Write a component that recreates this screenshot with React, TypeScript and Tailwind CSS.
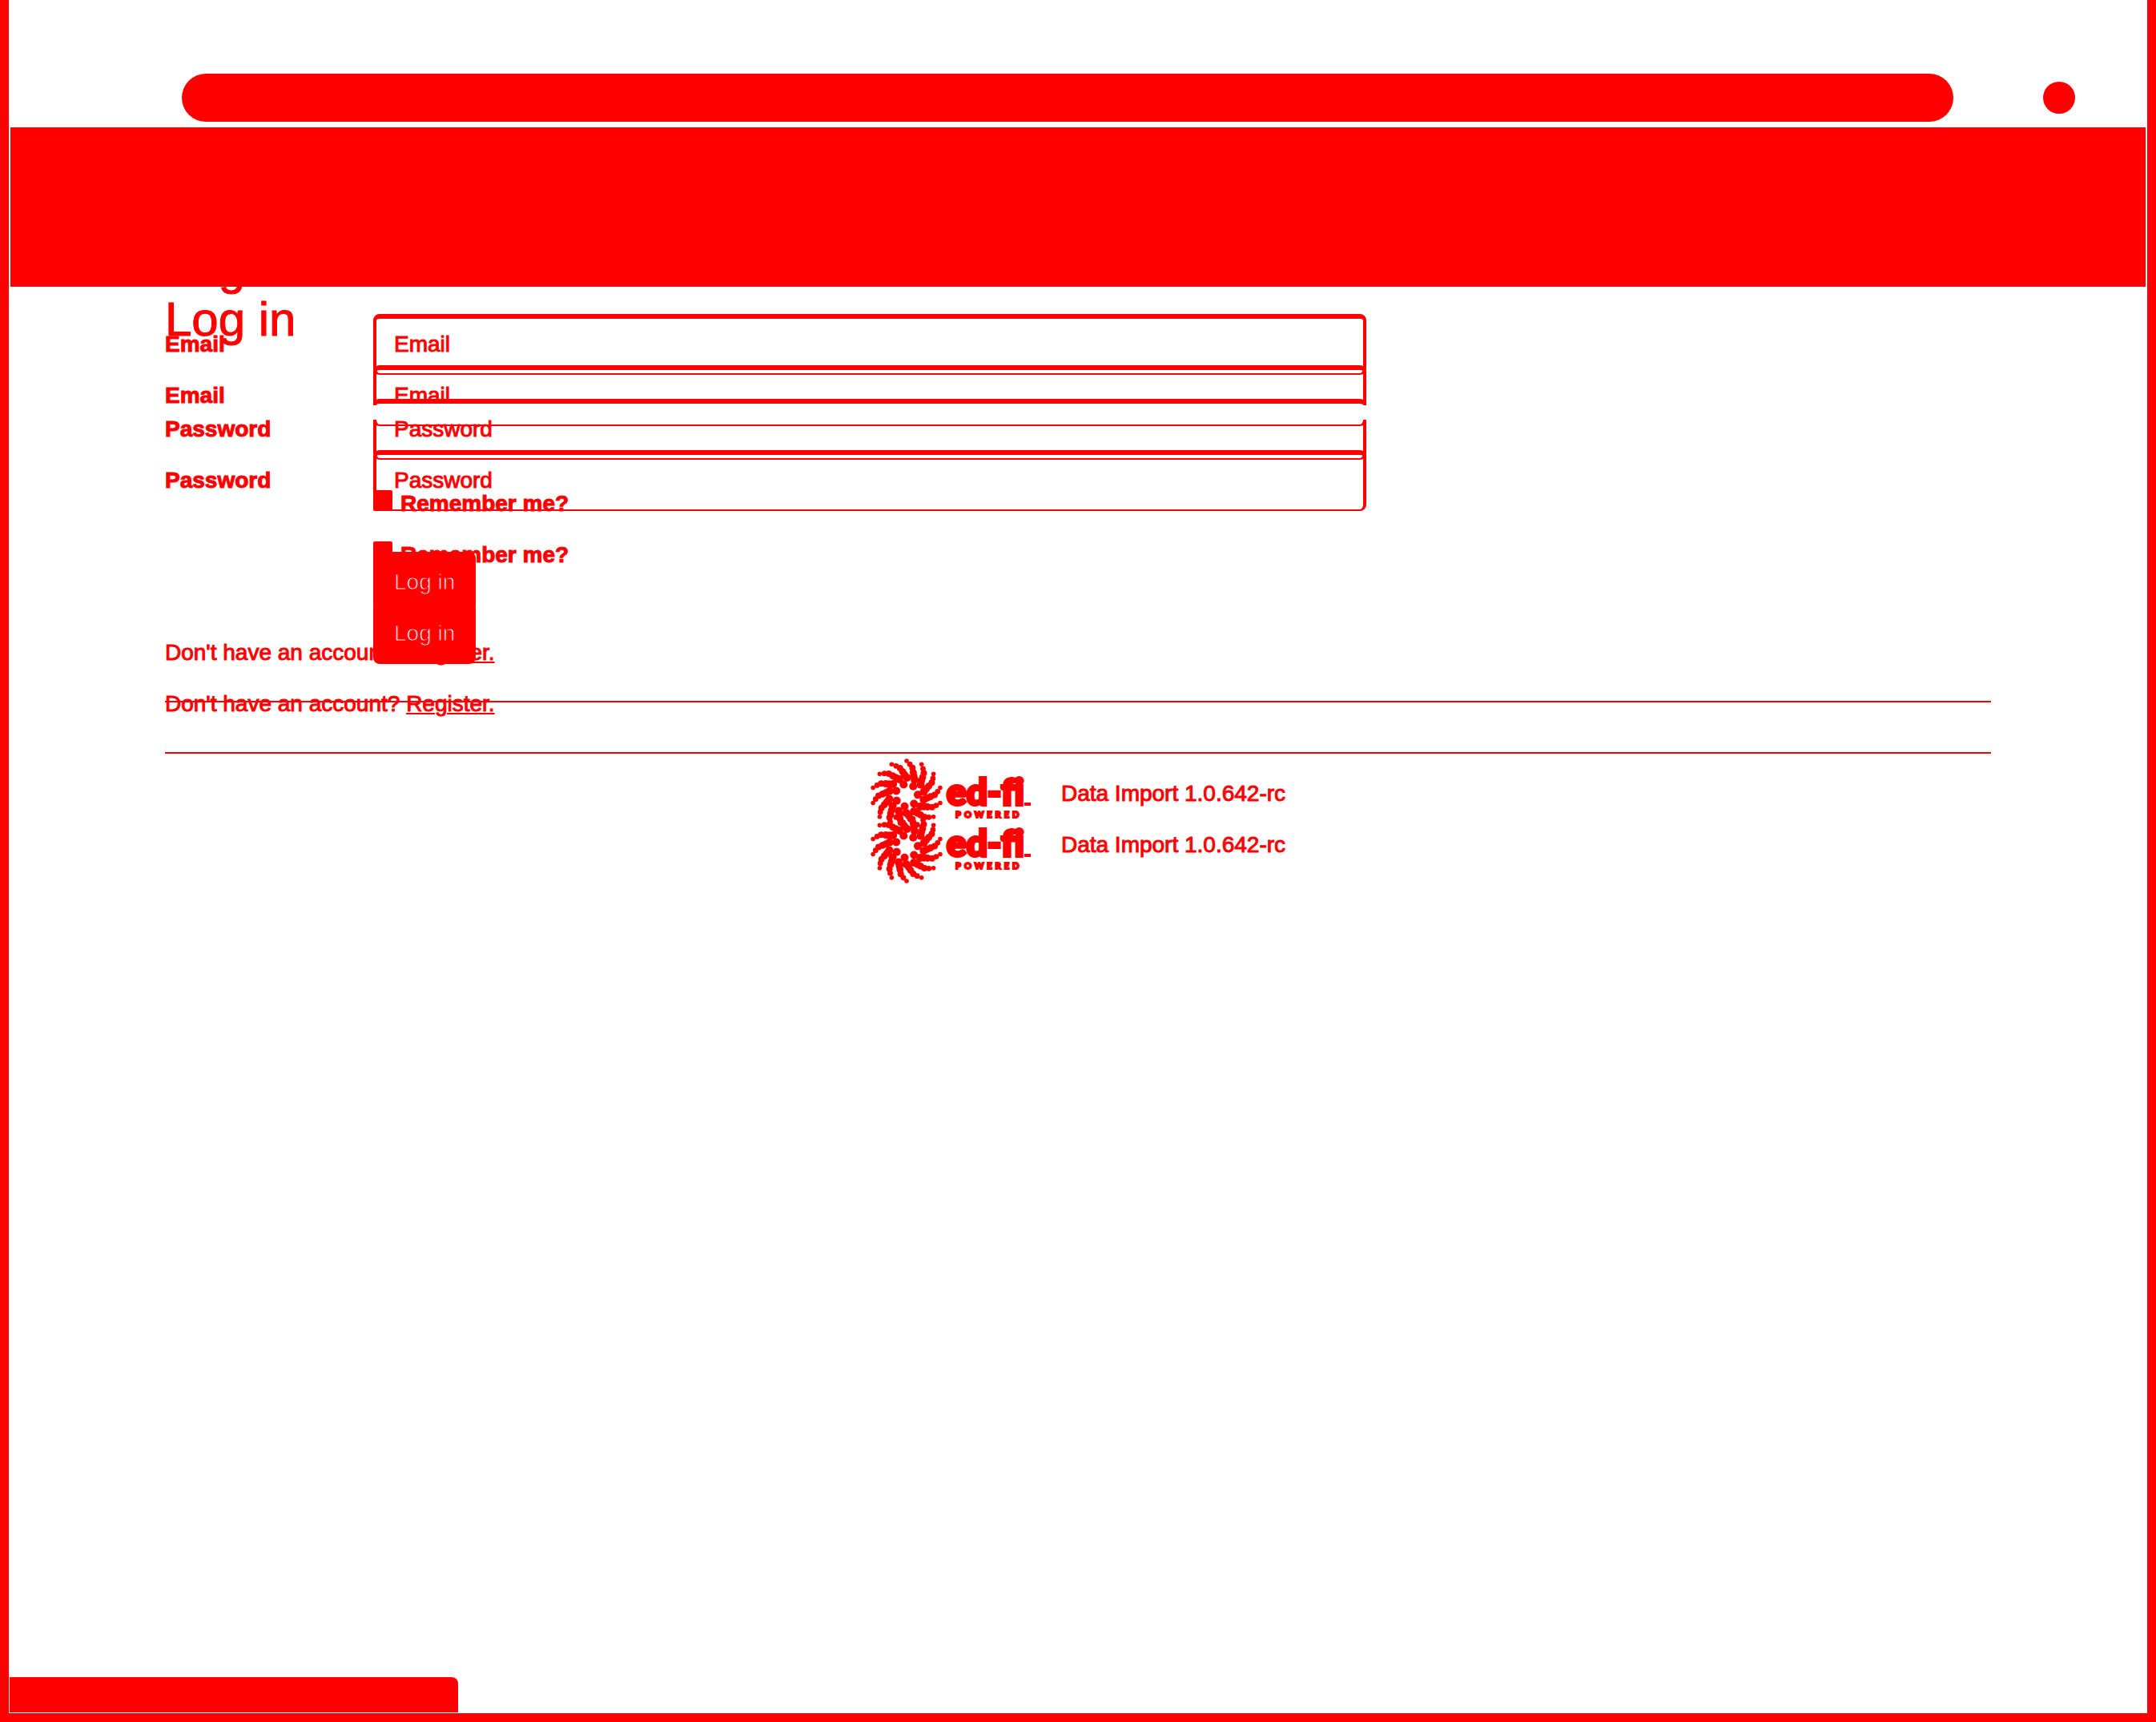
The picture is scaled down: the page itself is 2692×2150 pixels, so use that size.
import { useId } from "react";

const ARMS = Array.from({ length: 14 }, (_, i) => i);

/* Beads of one arm, from the tip inwards: distance, twist in degrees, size. */
const BEADS = [
  { r: 43, twist: 0, size: 2.8 },
  { r: 39, twist: 6, size: 3.4 },
  { r: 35, twist: 12, size: 4 },
  { r: 30, twist: 16, size: 4.4 },
  { r: 26, twist: 20, size: 4.6 },
  { r: 22, twist: 27, size: 5 },
];

function EdFiLogo() {
  return (
    <svg
      viewBox="0 0 200 92"
      className="h-[92px] w-[200px] shrink-0"
      fill="#ff0000"
      role="img"
      aria-label="Ed-Fi powered"
    >
      {ARMS.map((arm) => {
        const start = -90 + (arm * 360) / 14;
        const beads =
          arm % 2 === 0 ? [...BEADS, { r: 14, twist: 36, size: 5 }] : BEADS;
        return beads.map((bead) => {
          const angle = ((start + bead.twist) * Math.PI) / 180;
          return (
            <circle
              key={`${arm}-${bead.r}`}
              cx={45 + bead.r * Math.cos(angle)}
              cy={46 + bead.r * Math.sin(angle)}
              r={bead.size}
            />
          );
        });
      })}
      <text
        x="95"
        y="58"
        stroke="#ff0000"
        strokeWidth="4"
        className="font-['Lato',sans-serif] text-[46px] font-black [font-variant-ligatures:none]"
      >
        ed-fi
      </text>
      <text
        x="106"
        y="74"
        stroke="#ff0000"
        strokeWidth="2"
        className="font-['Lato',sans-serif] text-[11px] font-black tracking-[4px]"
      >
        POWERED
      </text>
      <rect x="192" y="55" width="8" height="4" />
    </svg>
  );
}

function Field({
  label,
  type,
  blankSides = false,
}: {
  label: string;
  type: string;
  blankSides?: boolean;
}) {
  const id = useId();
  return (
    <div className="flex items-center">
      <label htmlFor={id} className="w-[260px] shrink-0 font-bold">
        {label}
      </label>
      <div className="relative w-[1240px] max-w-full">
        <input
          id={id}
          type={type}
          placeholder={label}
          className="block h-[76px] w-full rounded-lg border-x-4 border-t-[6px] border-b-2 border-[#ff0000] bg-transparent px-[22px] pb-1 text-[#ff0000] outline-none placeholder:text-[#ff0000] placeholder:opacity-100"
        />
        {blankSides && (
          <span className="absolute inset-x-0 top-2 z-10 h-[18px] bg-white" />
        )}
      </div>
    </div>
  );
}

function LoginLayer({ blankSides = false }: { blankSides?: boolean }) {
  const rememberId = useId();
  return (
    <div>
      <h2 className="text-[60px] leading-[66px]">Log in</h2>
      <form className="mt-6">
        <div className="flex flex-col gap-[30px]">
          <Field label="Email" type="email" />
          <Field label="Password" type="password" blankSides={blankSides} />
        </div>
        <div className="mt-[35px] ml-[260px] flex items-center gap-2.5">
          <input
            id={rememberId}
            type="checkbox"
            className="mb-2 h-[26px] w-6 appearance-none rounded-xs bg-[#ff0000]"
          />
          <label htmlFor={rememberId} className="font-bold">
            Remember me?
          </label>
        </div>
        <button
          type="button"
          className="mt-10 ml-[260px] block h-[76px] rounded-lg bg-[#ff0000] px-[26px] text-white"
        >
          Log in
        </button>
      </form>
      <p className="mt-[30px]">
        Don't have an account?{" "}
        <a href="#register" className="underline decoration-2 underline-offset-2">
          Register.
        </a>
      </p>
      <hr className="mt-10 border-t-2 border-[#ff0000]" />
      <footer className="mt-[70px] flex items-center justify-center gap-[38px]">
        <EdFiLogo />
        <p className="pb-1">Data Import 1.0.642-rc</p>
      </footer>
    </div>
  );
}

export default function App() {
  return (
    <div className="flex min-h-screen flex-col border-x-[11px] border-b-[11px] border-[#ff0000] bg-white font-['Liberation_Sans',Arial,sans-serif] text-[28px] leading-10 text-[#ff0000] [-webkit-text-stroke:1px_#ff0000]">
      <header className="flex items-center gap-28 pt-[92px] pr-[90px] pl-[216px]">
        <div className="h-[60px] flex-1 rounded-full bg-[#ff0000]" />
        <div className="size-10 rounded-full bg-[#ff0000]" />
      </header>
      <div className="mx-0.5 mt-[7px] h-[199px] bg-[#ff0000]" />
      <main className="mx-auto -mt-14 grid w-full max-w-[2280px]">
        <div className="[grid-area:1/1]">
          <LoginLayer blankSides />
        </div>
        <div className="mt-16 [grid-area:1/1]">
          <LoginLayer />
        </div>
      </main>
      <div className="mt-auto mb-px ml-px h-11 w-[560px] rounded-tr-lg bg-[#ff0000]" />
    </div>
  );
}
